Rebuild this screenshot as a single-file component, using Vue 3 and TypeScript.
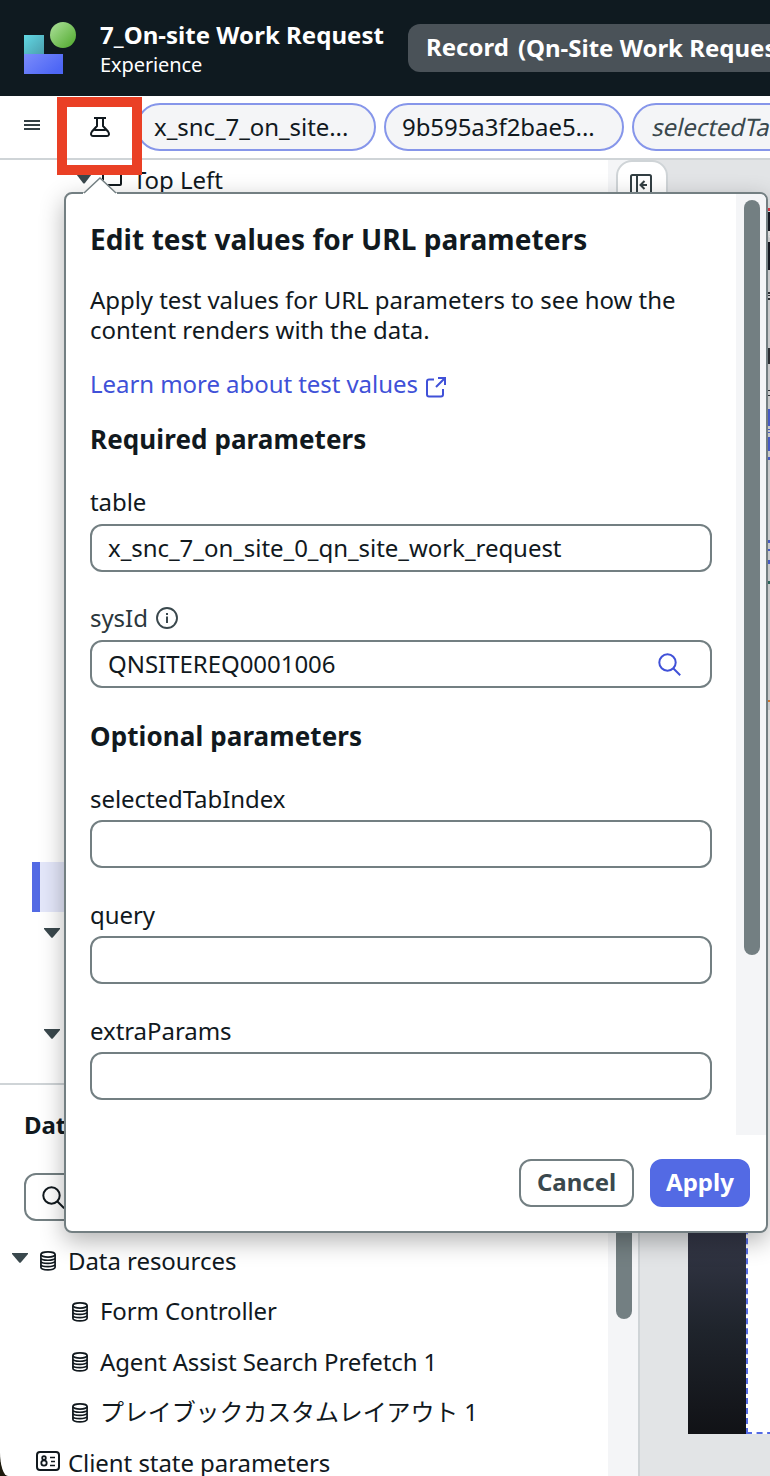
<script setup lang="ts">
import { ref } from 'vue'

interface Field {
  name: string
  value: string
  info?: boolean
  search?: boolean
}

const required = ref<Field[]>([
  { name: 'table', value: 'x_snc_7_on_site_0_qn_site_work_request' },
  { name: 'sysId', value: 'QNSITEREQ0001006', info: true, search: true },
])
const optional = ref<Field[]>([
  { name: 'selectedTabIndex', value: '' },
  { name: 'query', value: '' },
  { name: 'extraParams', value: '' },
])
const resources: string[] = ['Form Controller', 'Agent Assist Search Prefetch 1', 'プレイブックカスタムレイアウト 1']
</script>

<template>
  <div class="app">
    <header class="header">
      <svg class="logo" width="54" height="54" viewBox="0 0 54 54">
        <defs>
          <linearGradient id="teal" x1="0" y1="0" x2="1" y2="1"><stop offset="0" stop-color="#62d8e4" /><stop offset="1" stop-color="#4a9dab" /></linearGradient>
          <linearGradient id="indigo" x1="0" y1="0" x2="1" y2=".6"><stop offset="0" stop-color="#7b8cfb" /><stop offset="1" stop-color="#4d66f5" /></linearGradient>
          <linearGradient id="leaf" x1="0" y1="0" x2="1" y2="1"><stop offset=".1" stop-color="#a5dc91" /><stop offset=".9" stop-color="#57ad35" /></linearGradient>
        </defs>
        <rect x="0" y="13" width="20" height="20" fill="url(#teal)" />
        <rect x="0" y="32" width="39" height="20" fill="url(#indigo)" />
        <circle cx="39" cy="13" r="13" fill="url(#leaf)" />
      </svg>
      <div class="titles">
        <div class="title">7_On-site Work Request</div>
        <div class="subtitle">Experience</div>
      </div>
      <div class="record"><span>Record</span><span class="variant">(Qn-Site Work Request)</span></div>
    </header>

    <nav class="toolbar">
      <svg class="menu" width="16" height="12" viewBox="0 0 16 12"><path d="M0 1h16M0 5h16M0 9h16" stroke="#333f43" stroke-width="2" /></svg>
      <div class="flask-box">
        <svg width="20" height="22" viewBox="0 0 20 22" fill="none" stroke="#11191e" stroke-width="2"><path d="M4 2h12M7 2v8L2 15.500C.2 18 1.200 20 3 20h14c1.800 0 2.800-2 1-4.500L13 10V2M4.500 14h11" /></svg>
      </div>
      <div class="pill first">x_snc_7_on_site...</div>
      <div class="pill second">9b595a3f2bae5...</div>
      <div class="pill third"><span class="slant">selectedTabIndex</span></div>
    </nav>

    <main class="body">
      <section class="side">
        <div class="tree">
          <div class="row top-left">
            <svg class="caret" width="16" height="10" viewBox="0 0 16 10"><path d="M.5.5h15L9 9q-1 1-2 0z" fill="#3a484d" /></svg>
            <i class="box"></i><span>Top Left</span>
          </div>
          <div class="selected"></div>
          <svg class="caret c1" width="16" height="10" viewBox="0 0 16 10"><path d="M0 0h16v1L9 9.300q-1 1-2 0L0 1z" fill="#3a484d" /></svg>
          <svg class="caret c2" width="16" height="10" viewBox="0 0 16 10"><path d="M0 0h16v1L9 9.300q-1 1-2 0L0 1z" fill="#3a484d" /></svg>
        </div>
        <div class="data">
          <div class="data-title">Data and scripts</div>
          <div class="data-search">
            <svg width="24" height="24" viewBox="0 0 24 24" fill="none" stroke="#11191e" stroke-width="2"><circle cx="9.500" cy="9.500" r="8.200" /><path d="M15.200 15.200l7 7" /></svg>
          </div>
          <div class="row group">
            <svg class="caret" width="16" height="10" viewBox="0 0 16 10"><path d="M0 0h16v1L9 9.300q-1 1-2 0L0 1z" fill="#3a484d" /></svg>
            <svg class="db" width="16" height="20" viewBox="0 0 16 20" fill="none" stroke="#11191e" stroke-width="1.700"><ellipse cx="8" cy="3.500" rx="7.100" ry="2.600" /><path d="M.9 3.500v12.800c0 3.500 14.200 3.500 14.200 0V3.500M.9 7c0 3 14.200 3 14.200 0M.9 10c0 3.200 14.200 3.200 14.200 0M.9 13.200c0 3.200 14.200 3.200 14.200 0" /></svg>
            <span>Data resources</span>
          </div>
          <div v-for="name in resources" :key="name" class="row child">
            <svg class="db" width="16" height="20" viewBox="0 0 16 20" fill="none" stroke="#11191e" stroke-width="1.700"><ellipse cx="8" cy="3.500" rx="7.100" ry="2.600" /><path d="M.9 3.500v12.800c0 3.500 14.200 3.500 14.200 0V3.500M.9 7c0 3 14.200 3 14.200 0M.9 10c0 3.200 14.200 3.200 14.200 0M.9 13.200c0 3.200 14.200 3.200 14.200 0" /></svg>
            <span>{{ name }}</span>
          </div>
          <div class="row state">
            <svg width="24" height="20" viewBox="0 0 24 20" fill="none" stroke="#11191e" stroke-width="2"><rect x="1" y="1" width="22" height="18" rx="3" /><circle cx="8" cy="7" r="1.800" stroke-width="1.800" /><circle cx="8" cy="12" r="2.700" stroke-width="1.800" /><path d="M14 6.500h5M15 10.500h4M14 14.500h5" stroke-width="1.600" /></svg>
            <span>Client state parameters</span>
          </div>
        </div>
      </section>
      <div class="gutter"><div class="thumb"></div></div>
      <section class="canvas">
        <div class="rail"></div>
        <div class="page">
          <svg class="edge" width="22" height="510" viewBox="0 0 22 510">
            <path d="M0 0h22v510H0z" fill="#e9eaec" />
            <path d="M0 8h22v3H0z" fill="#e73c49" />
            <path d="M0 12h22v19H0zM0 42h22v28H0z" fill="#181c26" />
            <path d="M20 31h2v4l-2 1zM20 36h2v2z" fill="#fff" />
            <path d="M0 92h22v2H0zM0 95h22v1H0zM0 98h22v2H0zM20 148h2v16h-2zM0 190h22v1H0zM0 195h22v1H0z" fill="#34383d" />
            <path d="M0 209h22v17H0zM0 229h22v1H0zM0 232h22v1H0zM0 237h22v14H0zM0 257h22v3H0zM0 340h22v3H0zM0 349h22v2H0zM0 360h22v4H0z" fill="#536ae4" />
            <path d="M0 381h22v3H0z" fill="#34776c" />
            <path d="M0 500h22v2H0z" fill="#f38b36" />
          </svg>
        </div>
      </section>
    </main>

    <div class="toggle">
      <svg width="22" height="22" viewBox="0 0 22 22" fill="none" stroke="#333f43" stroke-width="2"><rect x="1" y="1" width="20" height="20" rx="1.500" /><path d="M7 1v20M17 11h-6M14.500 7l-4 4 4 4" /></svg>
    </div>

    <aside class="popover">
      <svg class="arrow" width="34" height="20" viewBox="0 0 34 20"><path d="M0 17L17 1l17 16v3H0z" fill="#fff" /><path d="M1 17L17 2l16 15" fill="none" stroke="#737f82" stroke-width="1.500" /></svg>
      <div class="scroll">
        <div class="form">
          <h1>Edit test values for URL parameters</h1>
          <p>Apply test values for URL parameters to see how the<br />content renders with the data.</p>
          <a class="link"><span>Learn more about test values</span>
            <svg width="22" height="22" viewBox="0 0 22 22" fill="none" stroke="#4051d8" stroke-width="2"><path d="M9 3.500H4q-2 0-2 2v13q0 2 2 2h12q2 0 2-2V13M13 2h7v7M20 2L11 11" /></svg>
          </a>
          <h2>Required parameters</h2>
          <div v-for="f in required" :key="f.name" class="field">
            <label :class="{ muted: f.info }"><span>{{ f.name }}</span>
              <svg v-if="f.info" width="22" height="22" viewBox="0 0 22 22"><circle cx="11" cy="11" r="10" fill="none" stroke="#3a484d" stroke-width="1.900" /><path d="M10 6h2v2h-2zM10 9.500h2v6.500h-2z" fill="#3a484d" /></svg>
            </label>
            <div class="input"><span>{{ f.value }}</span>
              <svg v-if="f.search" width="24" height="24" viewBox="0 0 24 24" fill="none" stroke="#4051d8" stroke-width="2"><circle cx="9.500" cy="9.500" r="8.200" /><path d="M15.200 15.200l7 7" /></svg>
            </div>
          </div>
          <h2 class="optional">Optional parameters</h2>
          <div v-for="f in optional" :key="f.name" class="field extra">
            <label><span>{{ f.name }}</span></label>
            <div class="input"></div>
          </div>
        </div>
        <div class="pop-gutter"><div class="pop-thumb"></div></div>
      </div>
      <footer><button class="cancel">Cancel</button><button class="apply">Apply</button></footer>
    </aside>
    <i class="highlight"></i>
  </div>
</template>

<style>
html, body { margin: 0; overflow: hidden; background: #fff; }
</style>

<style scoped>
* { box-sizing: border-box; }
.app { position: relative; width: 770px; height: 1476px; overflow: hidden; background: #fff; color: #11191e; font: 24px/30px "Noto Sans", "Noto Sans CJK JP", sans-serif; letter-spacing: -.06px; white-space: nowrap; }
svg { display: block; flex: none; }
.header { display: flex; height: 96px; padding-left: 24px; background: #0f1a20; color: #fff; }
.logo { margin-top: 22px; }
.titles { width: 308px; margin-left: 22px; padding-top: 20px; flex: none; }
.title { font-weight: 700; letter-spacing: .03px; }
.subtitle { font-size: 20px; letter-spacing: -.1px; }
.record { flex: none; display: flex; gap: 9px; width: 400px; height: 48px; margin-top: 24px; padding: 8px 18px; border-radius: 12px; background: #4a5258; font-weight: 700; letter-spacing: 0; }
.variant { padding-top: 1px; }
.toolbar { display: flex; height: 64px; border-bottom: 2px solid #cfd4d7; }
.menu { margin: 24px 0 0 24px; }
.flask-box { width: 98px; padding: 20px 0 0 50px; flex: none; }
.pill { flex: none; height: 48px; margin-top: 7px; padding: 7px 16px; border: 2px solid #8696ea; border-radius: 24px; background: #f4f5f7; }
.first { width: 240px; margin-left: -2px; }
.second { width: 240px; margin-left: 8px; }
.third { width: 240px; margin-left: 8px; padding-left: 19px; color: #3a484d; }
.slant { display: inline-block; transform: skewX(-13deg); }
.body { display: grid; grid-template-columns: 608px 32px 130px; height: 1316px; background: linear-gradient(#1d1a0d, #1d1a0d) 0 100% / 10px 24px no-repeat; }
.side { overflow: hidden; border-bottom-left-radius: 8px 24px; background: #fff; }
.tree { height: 925px; border-bottom: 2px solid #cfd4d7; }
.row { display: flex; align-items: center; }
.top-left { height: 40px; padding-left: 76px; }
.top-left .caret { margin-top: -3px; }
.box { width: 20px; height: 18px; margin: -7px 11px 0 10px; border: 2px solid #11191e; border-radius: 2px; }
.selected { height: 50px; margin: 662px 0 0 32px; border-left: 8px solid #536ae4; background: #e4e7fa; }
.c1 { margin: 16px 0 0 44px; }
.c2 { margin: 91px 0 0 44px; }
.data-title { padding: 25px 0 0 24px; font-weight: 700; }
.data-search { width: 560px; height: 48px; margin: 33px 0 0 24px; padding: 11px 16px; border: 2px solid #737f82; border-radius: 12px; }
.group { height: 50px; margin-top: 15px; padding-left: 12px; }
.group .caret { margin-top: -6px; }
.group .db { margin: 0 12px; }
.child { height: 50.500px; padding-left: 72px; gap: 12px; letter-spacing: -.12px; }
.child .db { margin-top: 1px; }
.state { height: 50px; padding-left: 36px; gap: 8px; }
.state svg { margin-top: -4px; }
.gutter { padding-top: 40px; border-right: 2px solid #cfd4d7; background: #f4f5f7; }
.thumb { width: 16px; height: 1119px; margin-left: 8px; border-radius: 8px; background: #737f82; }
.canvas { display: flex; padding: 40px 0 0 48px; background: #e2e4e6; overflow: hidden; }
.rail { flex: none; width: 58px; height: 1234px; background: linear-gradient(#353848 0 1030px, #1f242c 1130px, #111216); }
.page { flex: none; width: 80px; height: 1234px; border: 2px dashed #536ae4; border-top: 0; background: #fff; }
.toggle { position: absolute; left: 616px; top: 160px; width: 52px; height: 60px; padding: 12px 0 0 12px; border: 2px solid #cfd4d7; border-radius: 16px; background: #fff; }
.popover { position: absolute; left: 64px; top: 192px; width: 704px; height: 1041px; border: 2px solid #737f82; border-radius: 8px; background: #fff; box-shadow: 0 8px 24px rgba(0, 0, 0, .3); }
.arrow { position: absolute; left: 17px; top: -18px; }
.scroll { display: flex; height: 941px; overflow: hidden; border-top-right-radius: 6px; }
.form { width: 670px; padding: 29px 24px 0; }
.pop-gutter { width: 30px; padding: 6px 0 0 8px; background: #f4f5f7; }
.pop-thumb { width: 16px; height: 755px; border-radius: 8px; background: #737f82; }
h1, h2, p { margin: 0; }
h1 { font-size: 28px; line-height: 32px; letter-spacing: .09px; }
p { margin-top: 30px; }
.link { display: flex; align-items: center; gap: 7px; height: 30px; margin-top: 24px; color: #4051d8; }
.link svg { margin-top: 5px; }
h2 { margin: 24px 0 30px; font-size: 26px; line-height: 32px; letter-spacing: .1px; }
.field { margin-bottom: 29px; }
label { display: flex; align-items: center; gap: 9px; height: 33px; margin-bottom: 6px; }
.extra { margin-bottom: 30px; }
.extra label { margin-bottom: 5px; }
.muted { gap: 8px; color: #2b373c; }
.input { display: flex; justify-content: space-between; height: 48px; padding: 7px 28px 7px 16px; border: 2px solid #737f82; border-radius: 12px; letter-spacing: -.04px; }
.input svg { margin-top: 4px; }
h2.optional { margin: 32px 0 30px; }
footer { display: flex; justify-content: flex-end; gap: 16px; padding: 24px 16px 0; }
button { height: 48px; padding: 0 0 2px; border: 2px solid #737f82; border-radius: 12px; font: 700 24px/30px "Noto Sans", sans-serif; }
.cancel { width: 115px; background: #fff; color: #3a484d; }
.apply { width: 100px; border-color: #536ae4; background: #536ae4; color: #fff; }
.highlight { position: absolute; left: 57px; top: 97px; width: 85px; height: 78px; border: 10px solid #ea4025; }
</style>
